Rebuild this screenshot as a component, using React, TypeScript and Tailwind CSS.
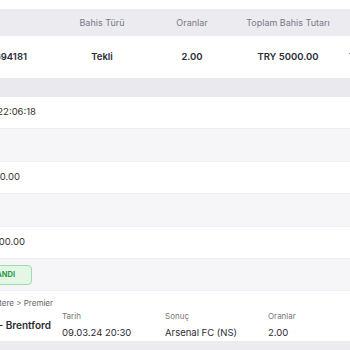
const font = { fontFamily: "Inter, 'Noto Sans', sans-serif" };

function DetailRow({ value, width, shade }: { value?: string; width?: string; shade?: boolean }) {
    return (
        <div className={`flex items-center border-b border-[#efeff3] ${shade ? "bg-[#f6f6f9] h-[33px]" : "bg-white h-[32px]"}`}>
            {value && <div className={`${width} shrink-0 text-right text-[9.5px] text-[#333]`}>{value}</div>}
        </div>
    );
}

export default function App() {
    return (
        <div className="w-[350px] h-[350px] overflow-hidden bg-white" style={font}>
            <div className="w-[600px] -ml-[100px] pt-[9px]">
                {/* header */}
                <div className="flex h-[27px] items-center bg-[#ebebf0] text-[9px] text-[#7a7a85]">
                    <div className="w-[157px] shrink-0" />
                    <div className="w-[90px] shrink-0 text-center">Bahis Türü</div>
                    <div className="w-[90px] shrink-0 text-center">Oranlar</div>
                    <div className="w-[102px] shrink-0 text-center">Toplam Bahis Tutarı</div>
                    <div className="pl-[28px]">Olası Kazanç</div>
                </div>
                {/* summary row */}
                <div className="flex h-[42px] items-center bg-white text-[9.5px] font-semibold text-[#2b2b33]">
                    <div className="w-[157px] shrink-0 pr-[30px] text-right">24031694181</div>
                    <div className="w-[90px] shrink-0 text-center">Tekli</div>
                    <div className="w-[90px] shrink-0 text-center">2.00</div>
                    <div className="w-[102px] shrink-0 text-center">TRY 5000.00</div>
                    <div className="pl-[10px]">TRY 10000.00</div>
                </div>
                <div className="h-[19px] bg-[#e9e9ee]" />
                <DetailRow value="09.03.2024, 22:06:18" width="w-[136px]" />
                <DetailRow shade />
                <DetailRow value="TRY 5000.00" width="w-[120px]" />
                <DetailRow shade />
                <DetailRow value="TRY 10000.00" width="w-[125px]" />
                {/* status */}
                <div className="flex h-[32px] items-center bg-[#f6f6f9] border-b border-[#efeff3]">
                    <div className="w-[132px] shrink-0 flex justify-end">
                        <span className="rounded-[4px] border border-[#9fdca8] bg-[#e4f7e7] px-[16px] py-[4px] text-[7.5px] font-bold leading-[10px] text-[#2f9a45]">
                            KAZANDI
                        </span>
                    </div>
                </div>
                {/* match */}
                <div className="bg-white">
                    <div className="flex h-[18px] items-end">
                        <div className="w-[153px] shrink-0 text-right text-[8px] text-[#666]">Futbol &gt; İngiltere &gt; Premier</div>
                    </div>
                    <div className="flex h-[32px] items-center">
                        <div className="w-[151px] shrink-0 text-right text-[10px] font-semibold text-[#2b2b33]">Arsenal FC - Brentford</div>
                        <div className="ml-[11px] w-[103px] shrink-0 flex flex-col gap-[4px]">
                            <span className="text-[8px] text-[#777]">Tarih</span>
                            <span className="text-[9.5px] text-[#2b2b33]">09.03.24 20:30</span>
                        </div>
                        <div className="w-[103px] shrink-0 flex flex-col gap-[4px]">
                            <span className="text-[8px] text-[#777]">Sonuç</span>
                            <span className="text-[9.5px] text-[#2b2b33]">Arsenal FC (NS)</span>
                        </div>
                        <div className="flex flex-col gap-[4px]">
                            <span className="text-[8px] text-[#777]">Oranlar</span>
                            <span className="text-[9.5px] text-[#2b2b33]">2.00</span>
                        </div>
                    </div>
                </div>
                <div className="h-[20px] bg-[#ebebf0]" />
            </div>
        </div>
    );
}
